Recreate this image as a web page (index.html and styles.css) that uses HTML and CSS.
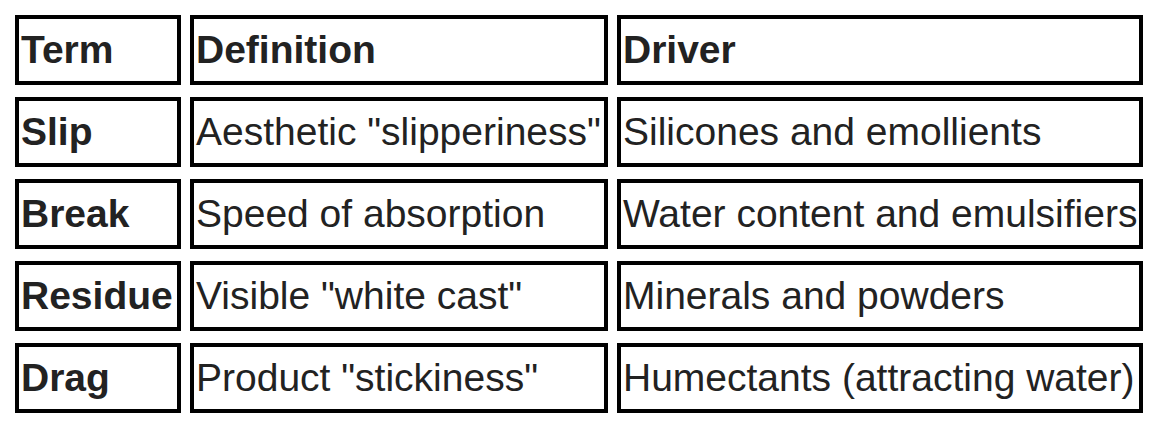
FILE: index.html
```html
<!DOCTYPE html>
<html lang="en">
<head>
<meta charset="utf-8">
<title>Texture terms</title>
<link rel="stylesheet" href="styles.css">
</head>
<body>
<table class="terms">
  <thead>
    <tr><th class="c1">Term</th><th class="c2">Definition</th><th class="c3">Driver</th></tr>
  </thead>
  <tbody>
    <tr><th class="c1">Slip</th><td class="c2">Aesthetic "slipperiness"</td><td class="c3">Silicones and emollients</td></tr>
    <tr><th class="c1">Break</th><td class="c2">Speed of absorption</td><td class="c3">Water content and emulsifiers</td></tr>
    <tr><th class="c1">Residue</th><td class="c2">Visible "white cast"</td><td class="c3">Minerals and powders</td></tr>
    <tr><th class="c1">Drag</th><td class="c2">Product "stickiness"</td><td class="c3">Humectants (attracting water)</td></tr>
  </tbody>
</table>
</body>
</html>
```
FILE: styles.css
```css
html, body {
  margin: 0;
  padding: 0;
  background: #ffffff;
}
.terms {
  margin: 3px 0 0 6px;
  border-collapse: separate;
  border-spacing: 9px 12px;
  font-family: "Liberation Sans", Arial, sans-serif;
  font-size: 39px;
  color: #222222;
}
.terms th,
.terms td {
  box-sizing: border-box;
  height: 70px;
  border: 4px solid #000000;
  padding: 0 2px;
  text-align: left;
  vertical-align: middle;
  white-space: nowrap;
}
.terms th {
  font-weight: bold;
}
.terms td {
  font-weight: normal;
}
.c1 { width: 166px; }
.c2 { width: 418px; }
.c3 { width: 526px; }
```
